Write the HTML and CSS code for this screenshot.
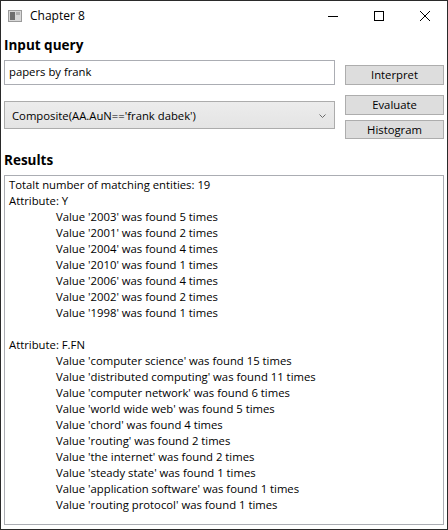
FILE: index.html
```html
<!DOCTYPE html>
<html>
<head>
<meta charset="utf-8">
<link rel="stylesheet" href="styles.css">
</head>
<body>
<div class="window">
  <div class="titlebar">
    <svg class="appicon" width="14" height="12" viewBox="0 0 14 12">
      <rect x="0.5" y="0.5" width="13" height="11" fill="#d8d8d8" stroke="#9a9a9a"/>
      <rect x="2" y="2" width="5" height="8" fill="#6f6f6f"/>
      <rect x="8" y="2" width="4" height="3" fill="#b0b0b0"/>
    </svg>
    <span class="title">Chapter 8</span>
    <div class="caption-buttons">
      <svg class="cap" width="46" height="30" viewBox="0 0 46 30"><line x1="18" y1="15.5" x2="28" y2="15.5" stroke="#000" stroke-width="1"/></svg>
      <svg class="cap" width="46" height="30" viewBox="0 0 46 30"><rect x="18.5" y="10.5" width="9" height="9" fill="none" stroke="#000" stroke-width="1"/></svg>
      <svg class="cap" width="46" height="30" viewBox="0 0 46 30"><path d="M18 10 L28 20 M28 10 L18 20" stroke="#000" stroke-width="1" fill="none"/></svg>
    </div>
  </div>
  <div class="content">
    <h2 class="heading first">Input query</h2>
    <div class="row row-query">
      <div class="textbox">papers by frank</div>
      <div class="btncol btncol-1">
        <div class="button">Interpret</div>
      </div>
    </div>
    <div class="row row-interp">
      <div class="combobox">
        <span>Composite(AA.AuN=='frank dabek')</span>
        <svg class="chev" width="7" height="5" viewBox="0 0 7 5"><polyline points="0.5,0.5 3.5,3.5 6.5,0.5" fill="none" stroke="#6a6a6a" stroke-width="1"/></svg>
      </div>
      <div class="btncol btncol-2">
        <div class="button">Evaluate</div>
        <div class="button">Histogram</div>
      </div>
    </div>
    <h2 class="heading second">Results</h2>
    <div class="results">
      <div class="line">Totalt number of matching entities: 19</div>
      <div class="line">Attribute: Y</div>
      <div class="line ind">Value '2003' was found 5 times</div>
      <div class="line ind">Value '2001' was found 2 times</div>
      <div class="line ind">Value '2004' was found 4 times</div>
      <div class="line ind">Value '2010' was found 1 times</div>
      <div class="line ind">Value '2006' was found 4 times</div>
      <div class="line ind">Value '2002' was found 2 times</div>
      <div class="line ind">Value '1998' was found 1 times</div>
      <div class="line blank"></div>
      <div class="line">Attribute: F.FN</div>
      <div class="line ind">Value 'computer science' was found 15 times</div>
      <div class="line ind">Value 'distributed computing' was found 11 times</div>
      <div class="line ind">Value 'computer network' was found 6 times</div>
      <div class="line ind">Value 'world wide web' was found 5 times</div>
      <div class="line ind">Value 'chord' was found 4 times</div>
      <div class="line ind">Value 'routing' was found 2 times</div>
      <div class="line ind">Value 'the internet' was found 2 times</div>
      <div class="line ind">Value 'steady state' was found 1 times</div>
      <div class="line ind">Value 'application software' was found 1 times</div>
      <div class="line ind">Value 'routing protocol' was found 1 times</div>
    </div>
  </div>
</div>
</body>
</html>
```

FILE: styles.css
```css
html, body {
  margin: 0;
  padding: 0;
  background: #ffffff;
}
body {
  width: 448px;
  height: 530px;
  font-family: "Open Sans", "Noto Sans", "Liberation Sans", sans-serif;
  font-size: 11.3px;
  color: #000;
}
.window {
  box-sizing: border-box;
  width: 448px;
  height: 530px;
  border: 1px solid #2a2a2a;
  background: #fff;
  display: flex;
  flex-direction: column;
}
.titlebar {
  height: 29px;
  display: flex;
  align-items: center;
  position: relative;
}
.appicon {
  margin-left: 7px;
  margin-top: 1px;
}
.title {
  margin-left: 8px;
  font-size: 12px;
  line-height: 16px;
  margin-top: 1px;
}
.caption-buttons {
  margin-left: auto;
  display: flex;
  align-self: flex-start;
  margin-right: -1px;
}
.cap {
  display: block;
}
.content {
  padding: 0 2px 0 3px;
  display: flex;
  flex-direction: column;
}
.heading {
  margin: 0;
  font-weight: 700;
  font-size: 13.5px;
  line-height: 18px;
}
.heading.first {
  margin-top: 6px;
}
.heading.second {
  margin-top: 12px;
}
.row {
  display: grid;
  grid-template-columns: 331px 99px;
  column-gap: 10px;
}
.row-query {
  margin-top: 6px;
  height: 25px;
}
.textbox {
  box-sizing: border-box;
  height: 25px;
  border: 1px solid #abadb3;
  padding: 0 4px;
  line-height: 22px;
}
.btncol {
  display: flex;
  flex-direction: column;
}
.btncol-1 {
  padding-top: 5px;
}
.row-interp {
  margin-top: 10px;
}
.btncol-2 {
  gap: 5px;
}
.button {
  box-sizing: border-box;
  height: 20px;
  background: #dddddd;
  border: 1px solid #adadad;
  text-align: center;
  line-height: 17px;
}
.btncol-2 .button:last-child {
  height: 19px;
}
.combobox {
  box-sizing: border-box;
  margin-top: 6px;
  height: 28px;
  border: 1px solid #acacac;
  background: linear-gradient(#ececec, #e4e4e4);
  display: flex;
  align-items: center;
  padding: 0 8px 0 7px;
}
.combobox span {
  flex: 1;
}
.chev {
  display: block;
  margin-top: 2px;
}
.results {
  box-sizing: border-box;
  margin-top: 6px;
  height: 350px;
  width: 440px;
  border: 1px solid #abadb3;
  padding: 1px 4px;
}
.line {
  height: 16px;
  line-height: 16px;
  white-space: nowrap;
}
.line.ind {
  padding-left: 47px;
}
```
